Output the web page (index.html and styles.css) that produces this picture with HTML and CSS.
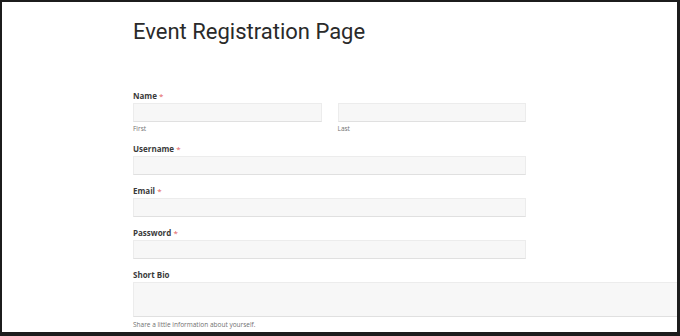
FILE: index.html
```html
<!DOCTYPE html>
<html lang="en">
<head>
<meta charset="utf-8">
<title>Event Registration Page</title>
<link rel="stylesheet" href="styles.css">
</head>
<body>
<div class="frame">
  <main class="content">
    <h1 class="page-title">Event Registration Page</h1>
    <form class="form">
      <div class="field">
        <div class="label">Name <span class="req">*</span></div>
        <div class="name-row">
          <div class="name-col">
            <div class="input"></div>
            <div class="sublabel">First</div>
          </div>
          <div class="name-col">
            <div class="input"></div>
            <div class="sublabel">Last</div>
          </div>
        </div>
      </div>
      <div class="field">
        <div class="label">Username <span class="req">*</span></div>
        <div class="input wide"></div>
      </div>
      <div class="field">
        <div class="label">Email <span class="req">*</span></div>
        <div class="input wide"></div>
      </div>
      <div class="field">
        <div class="label">Password <span class="req">*</span></div>
        <div class="input wide"></div>
      </div>
      <div class="field">
        <div class="label">Short Bio</div>
        <div class="textarea"></div>
        <div class="sublabel help">Share a little information about yourself.</div>
      </div>
    </form>
  </main>
</div>
</body>
</html>
```

FILE: styles.css
```css
html, body {
  margin: 0;
  padding: 0;
  background: #ffffff;
}

.frame {
  box-sizing: border-box;
  width: 680px;
  height: 336px;
  border-style: solid;
  border-color: #1c1c1c;
  border-width: 2px 3px 4px 2px;
  overflow: hidden;
  font-family: "Open Sans", "Noto Sans", sans-serif;
  color: #333333;
}

.content {
  padding: 0 0 0 131px;
}

.page-title {
  margin: 0;
  padding-top: 15px;
  font-family: Roboto, "Open Sans", sans-serif;
  font-size: 22px;
  line-height: 30px;
  font-weight: 400;
  color: #2a2a2a;
  height: 72px;
}

.form {
  display: flex;
  flex-direction: column;
}

.field {
  margin-bottom: 9px;
}

.label {
  font-size: 8px;
  line-height: 14px;
  font-weight: 700;
  color: #3a3a3a;
}

.req {
  color: #e35b5b;
  font-weight: 400;
}

.name-row {
  display: flex;
  gap: 16px;
  width: 393px;
}

.name-col {
  flex: 1;
}

.input {
  box-sizing: border-box;
  height: 19px;
  background: #f7f7f7;
  border: 1px solid #ececec;
  border-bottom-color: #e0e0e0;
}

.wide {
  width: 393px;
}

.textarea {
  box-sizing: border-box;
  height: 35px;
  width: 560px;
  background: #f7f7f7;
  border: 1px solid #ececec;
  border-bottom-color: #e0e0e0;
}

.sublabel {
  font-size: 6.5px;
  line-height: 9px;
  padding-top: 2px;
  color: #707070;
}

.help {
  padding-top: 3px;
}
```
